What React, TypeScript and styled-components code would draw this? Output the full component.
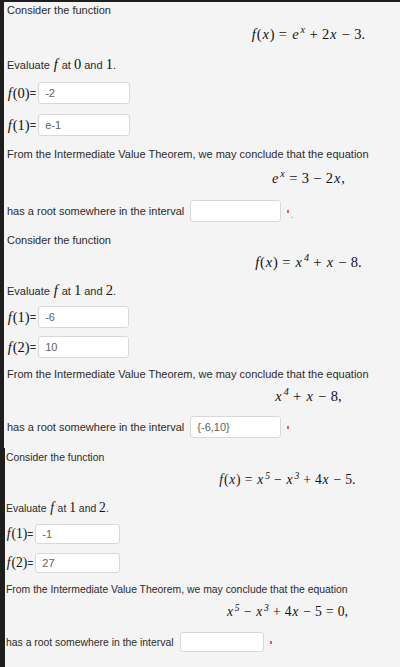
import styled, { createGlobalStyle } from "styled-components";

const GlobalStyle = createGlobalStyle`
  html, body {
    margin: 0;
    padding: 0;
    background: #f4f4f4;
    overflow: hidden;
  }
  body {
    font-family: "Liberation Sans", Arial, sans-serif;
    color: #2b2b2b;
  }
`

const Page = styled.div`
  display: flex;
  flex-direction: column;
  height: 667px;
  border-top: 2px solid #1e1e1e;
  box-sizing: border-box;
  background: #f4f4f4;
`

const Sheet = styled.div<{ $edge: number; $grow?: boolean }>`
  border-left: ${p => p.$edge}px solid #1e1e1e;
  flex: ${p => (p.$grow ? 1 : "none")};
`

const Problem = styled.section<{ $gap: number; $padLeft: number; $padTop: number; $small?: boolean }>`
  display: flex;
  flex-direction: column;
  gap: ${p => p.$gap}px;
  padding: ${p => p.$padTop}px 0 10px ${p => p.$padLeft}px;
  font-size: ${p => (p.$small ? 10.4 : 11)}px;
  --line: ${p => (p.$small ? 15 : 16)}px;
  --eq: ${p => (p.$small ? 17 : 18)}px;
  --field: ${p => (p.$small ? 20 : 22)}px;
  --math: ${p => (p.$small ? 13.6 : 14.5)}px;
`

const Line = styled.div`
  height: var(--line);
  line-height: var(--line);
  white-space: nowrap;
`

const Display = styled.div<{ $indent: number }>`
  height: var(--eq);
  line-height: var(--eq);
  padding-left: ${p => p.$indent}px;
  text-align: center;
  white-space: nowrap;
  margin-top: -3px;
  margin-bottom: 3px;
`

const Row = styled.div`
  display: flex;
  align-items: center;
  height: var(--field);
  white-space: nowrap;
`

const TeX = styled.span`
  font-family: "Liberation Serif", "Times New Roman", serif;
  font-size: var(--math);
  color: #111;
`

const V = styled.i`
  font-family: "Liberation Serif", "Times New Roman", serif;
  font-style: italic;
  padding: 0 0.06em;
`

const Sup = styled.sup`
  font-family: "Liberation Serif", "Times New Roman", serif;
  font-size: 0.7em;
  vertical-align: 0.55em;
  line-height: 0;
  font-style: italic;
  margin-left: 1px;
`

const Op = styled.span`
  margin: 0 0.3em;
`

const Field = styled.div<{ $w: number }>`
  width: ${p => p.$w}px;
  height: var(--field);
  box-sizing: border-box;
  margin-left: 2px;
  background: #fff;
  border: 1px solid #d9d9d9;
  border-radius: 3px;
  padding-left: 6px;
  display: flex;
  align-items: center;
  color: #606060;
  font-size: 11px;
`

const IntervalField = styled(Field)`
  margin-left: 6px;
`

const Mark = styled.span`
  display: inline-block;
  width: 2px;
  height: 3px;
  margin-left: 6px;
  background: #e8585a;
`

const Dot = styled.span`
  color: #999;
  margin-left: 1px;
  transform: translateY(3px);
`

function Fx({ arg }: { arg: string }) {
  return (
    <TeX>
      <V>f</V>({arg})
    </TeX>
  )
}

export default function App() {
  return (
    <>
      <GlobalStyle />
      <Page>
        <Sheet $edge={4}>
          <Problem $gap={10} $padLeft={3} $padTop={0}>
            <Line>Consider the function</Line>
            <Display $indent={209}>
              <TeX>
                <V>f</V>(<V>x</V>)<Op>=</Op><V>e</V><Sup>x</Sup><Op>+</Op>2<V>x</V><Op>−</Op>3.
              </TeX>
            </Display>
            <Line>
              Evaluate <TeX><V>f</V></TeX> at <TeX>0</TeX> and <TeX>1</TeX>.
            </Line>
            <Row>
              <Fx arg="0" />=<Field $w={92}>-2</Field>
            </Row>
            <Row>
              <Fx arg="1" />=<Field $w={92}>e-1</Field>
            </Row>
            <Line>From the Intermediate Value Theorem, we may conclude that the equation</Line>
            <Display $indent={209}>
              <TeX>
                <V>e</V><Sup>x</Sup><Op>=</Op>3<Op>−</Op>2<V>x</V>,
              </TeX>
            </Display>
            <Row>
              has a root somewhere in the interval
              <IntervalField $w={91} />
              <Mark />
              <Dot>.</Dot>
            </Row>
          </Problem>
          <Problem $gap={8} $padLeft={3} $padTop={0}>
            <Line>Consider the function</Line>
            <Display $indent={209}>
              <TeX>
                <V>f</V>(<V>x</V>)<Op>=</Op><V>x</V><Sup>4</Sup><Op>+</Op><V>x</V><Op>−</Op>8.
              </TeX>
            </Display>
            <Line>
              Evaluate <TeX><V>f</V></TeX> at <TeX>1</TeX> and <TeX>2</TeX>.
            </Line>
            <Row>
              <Fx arg="1" />=<Field $w={91}>-6</Field>
            </Row>
            <Row>
              <Fx arg="2" />=<Field $w={91}>10</Field>
            </Row>
            <Line>From the Intermediate Value Theorem, we may conclude that the equation</Line>
            <Display $indent={209}>
              <TeX>
                <V>x</V><Sup>4</Sup><Op>+</Op><V>x</V><Op>−</Op>8,
              </TeX>
            </Display>
            <Row>
              has a root somewhere in the interval
              <IntervalField $w={91}>{"{-6,10}"}</IntervalField>
              <Mark />
            </Row>
          </Problem>
        </Sheet>
        <Sheet $edge={5} $grow>
          <Problem $gap={9} $padLeft={1} $padTop={2} $small>
            <Line>Consider the function</Line>
            <Display $indent={168}>
              <TeX>
                <V>f</V>(<V>x</V>)<Op>=</Op><V>x</V><Sup>5</Sup><Op>−</Op><V>x</V><Sup>3</Sup><Op>+</Op>4<V>x</V><Op>−</Op>5.
              </TeX>
            </Display>
            <Line>
              Evaluate <TeX><V>f</V></TeX> at <TeX>1</TeX> and <TeX>2</TeX>.
            </Line>
            <Row>
              <Fx arg="1" />=<Field $w={85}>-1</Field>
            </Row>
            <Row>
              <Fx arg="2" />=<Field $w={85}>27</Field>
            </Row>
            <Line>From the Intermediate Value Theorem, we may conclude that the equation</Line>
            <Display $indent={168}>
              <TeX>
                <V>x</V><Sup>5</Sup><Op>−</Op><V>x</V><Sup>3</Sup><Op>+</Op>4<V>x</V><Op>−</Op>5<Op>=</Op>0,
              </TeX>
            </Display>
            <Row>
              has a root somewhere in the interval
              <IntervalField $w={84} />
              <Mark />
            </Row>
          </Problem>
        </Sheet>
      </Page>
    </>
  )
}
